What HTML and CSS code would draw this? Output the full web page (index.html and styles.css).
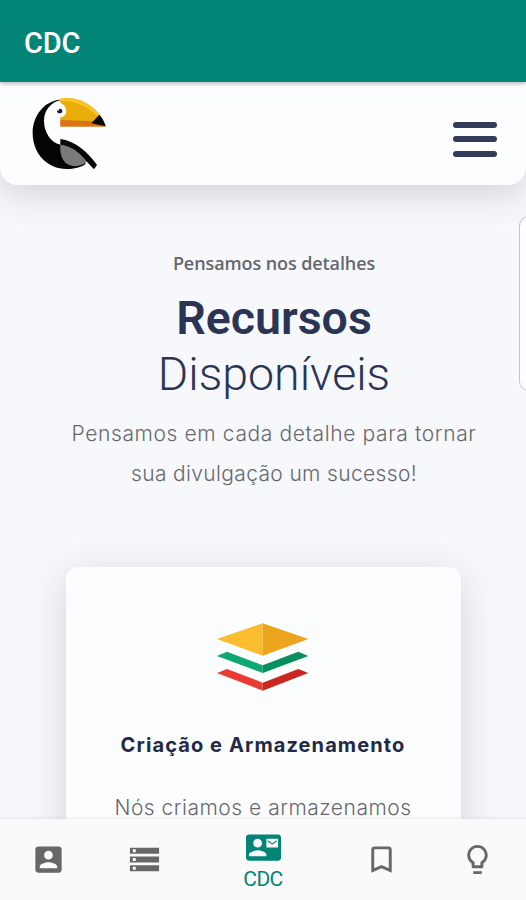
FILE: index.html
```html
<!DOCTYPE html>
<html lang="pt-BR">
<head>
  <meta charset="UTF-8" />
  <meta name="viewport" content="width=device-width, initial-scale=1.0"/>
  <title>CDC</title>
  <link rel="stylesheet" href="styles.css">
</head>
<body>
  <!-- App Bar -->
  <header class="app-bar">CDC</header>

  <!-- Site Navigation -->
  <nav class="site-nav">
    <svg class="logo" viewBox="36 30 222 216">
      <path d="M121 35C74 38 38 82 38 135C38 197 82 243 140 243C162 243 183 238 198 227L121 170C92 164 72 132 72 98C72 68 92 43 121 37Z" fill="#050505"/>
      <path d="M121 32C153 26 187 35 211 53C232 68 248 87 257 115L121 108V88C134 86 141 77 138 65C136 54 131 49 121 45Z" fill="#e9ad0a"/>
      <path d="M121 32C157 27 190 38 216 59L242 83L233 84C203 54 165 38 121 38Z" fill="#fcc425"/>
      <path d="M121 95L220 100L257 116H121Z" fill="#db7413"/>
      <path d="M238 80C247 90 253 101 257 115L214 106Z" fill="#080808"/>
      <ellipse cx="119" cy="69" rx="8" ry="7" fill="#172235"/>
      <circle cx="114" cy="65" r="3" fill="#fff"/>
      <path d="M121 171C153 174 184 192 202 220C187 235 164 239 143 229C126 219 119 196 121 171Z" fill="#7b7a7b"/>
      <path d="M121 153C164 158 204 192 231 231L222 244L202 223C180 193 153 174 121 171Z" fill="#080808"/>
    </svg>
    <div class="menu-button">
      <span></span>
      <span></span>
      <span></span>
    </div>
  </nav>

  <!-- Page Content -->
  <main class="content">
    <div class="side-panel"></div>
    <div class="intro">
      <p class="eyebrow">Pensamos nos detalhes</p>
      <h1><strong>Recursos</strong><span>Disponíveis</span></h1>
      <p class="lead"><span class="lead-first">Pensamos em cada detalhe para tornar</span><br><span class="lead-second">sua divulgação um sucesso!</span></p>
    </div>
    <section class="card">
      <svg class="layers" viewBox="54 40 276 204">
        <path d="M54 88L191 41V138Z" fill="#fbbc2d"/>
        <path d="M191 41L328 88L191 138Z" fill="#eba41b"/>
        <path d="M54 139L84 126L191 167V190Z" fill="#0fa873"/>
        <path d="M328 139L298 126L191 167V190Z" fill="#078f5d"/>
        <path d="M54 190L84 178L191 219V243Z" fill="#e83c32"/>
        <path d="M328 190L298 178L191 219V243Z" fill="#c9271f"/>
      </svg>
      <h2>Criação e Armazenamento</h2>
      <p>Nós criamos e armazenamos</p>
    </section>
  </main>

  <!-- Bottom Tabs -->
  <footer class="tabs">
    <a class="tab">
      <svg viewBox="0 0 24 24"><path d="M3 5v14c0 1.100.890 2 2 2h14c1.100 0 2-.900 2-2V5c0-1.100-.900-2-2-2H5c-1.110 0-2 .900-2 2zm12 4c0 1.660-1.340 3-3 3s-3-1.340-3-3 1.340-3 3-3 3 1.340 3 3zm-9 8c0-2 4-3.100 6-3.100s6 1.100 6 3.100v1H6v-1z"/></svg>
    </a>
    <a class="tab">
      <svg viewBox="0 0 24 24"><path d="M2 20h20v-4H2v4zm2-3h2v2H4v-2zM2 4v4h20V4H2zm4 3H4V5h2v2zm-4 7h20v-4H2v4zm2-3h2v2H4v-2z"/></svg>
    </a>
    <a class="tab active">
      <svg viewBox="0 0 24 24"><path d="M21 8V7l-3 2-3-2v1l3 2 3-2zm1-5H2C.9 3 0 3.900 0 5v14c0 1.100.9 2 2 2h20c1.100 0 1.990-.9 1.990-2L24 5c0-1.100-.9-2-2-2zM8 6c1.660 0 3 1.340 3 3s-1.340 3-3 3-3-1.340-3-3 1.340-3 3-3zm6 12H2v-1c0-2 4-3.100 6-3.100s6 1.100 6 3.100v1zm8-6h-8V6h8v6z"/></svg>
      <span>CDC</span>
    </a>
    <a class="tab">
      <svg viewBox="0 0 24 24"><path d="M17 3H7c-1.100 0-1.990.9-1.990 2L5 21l7-3 7 3V5c0-1.100-.9-2-2-2zm0 15l-5-2.180L7 18V5h10v13z"/></svg>
    </a>
    <a class="tab">
      <svg viewBox="0 0 24 24"><path d="M9 21c0 .55.450 1 1 1h4c.550 0 1-.450 1-1v-1H9v1zm3-19C8.140 2 5 5.140 5 9c0 2.380 1.190 4.470 3 5.740V17c0 .550.450 1 1 1h6c.550 0 1-.450 1-1v-2.260c1.810-1.270 3-3.360 3-5.740 0-3.860-3.140-7-7-7zm2.850 11.100l-.850.600V16h-4v-2.300l-.850-.600C7.800 12.160 7 10.630 7 9c0-2.760 2.240-5 5-5s5 2.240 5 5c0 1.630-.800 3.160-2.150 4.100z"/></svg>
    </a>
  </footer>
</body>
</html>
```
FILE: styles.css
```css
/* Reset and Base Styles */
* {
  margin: 0;
  padding: 0;
  box-sizing: border-box;
}
body {
  height: 900px;
  display: flex;
  flex-direction: column;
  overflow: hidden;
  font-family: Inter, sans-serif;
  background-color: #f7f8fc;
  color: #67686c;
}

/* App Bar */
.app-bar {
  position: relative;
  z-index: 2;
  flex: none;
  height: 82px;
  padding: 4px 24px 0;
  display: flex;
  align-items: center;
  background-color: #028576;
  color: #fff;
  font-family: Roboto, sans-serif;
  font-size: 29px;
  font-weight: 500;
  letter-spacing: -0.2px;
  box-shadow: 0 1px 5px rgba(0, 0, 0, 0.35);
}

/* Site Navigation */
.site-nav {
  position: relative;
  z-index: 1;
  flex: none;
  height: 103px;
  padding: 0 29px 0 32px;
  display: flex;
  align-items: center;
  justify-content: space-between;
  background-color: #fcfdff;
  border-radius: 0 0 18px 18px;
  box-shadow: 0 10px 34px rgba(40, 40, 50, 0.17);
}
.logo {
  width: 74px;
  height: 72px;
}
.menu-button {
  width: 44px;
  padding-top: 11px;
  display: flex;
  flex-direction: column;
  gap: 8.5px;
}
.menu-button span {
  height: 6px;
  border-radius: 3px;
  background-color: #333b5b;
}

/* Page Content */
.content {
  position: relative;
  flex: 1;
  min-height: 0;
  overflow: hidden;
}
.side-panel {
  position: absolute;
  top: 31px;
  right: -20px;
  width: 27px;
  height: 175px;
  border: 1px solid #c3c5c9;
  border-radius: 10px;
  background-color: #fcfdff;
}
.intro {
  padding: 64px 0 0 22px;
  text-align: center;
}
.eyebrow {
  font-family: "Open Sans", sans-serif;
  font-size: 18px;
  font-weight: 600;
  line-height: 28px;
  letter-spacing: -0.1px;
  color: #66676d;
}
h1 {
  margin-top: 13px;
  font-family: Roboto, sans-serif;
  font-size: 46.5px;
  line-height: 56px;
  color: #2b3553;
}
h1 strong,
h1 span {
  display: block;
}
h1 strong {
  font-weight: 600;
}
h1 span {
  font-weight: 300;
}
.lead {
  margin-top: 12px;
  font-size: 21px;
  font-weight: 300;
  line-height: 40px;
}
.lead-first {
  letter-spacing: 0.62px;
}
.lead-second {
  letter-spacing: 0.35px;
}

/* Feature Card */
.card {
  width: 395px;
  height: 400px;
  margin: 73px auto 0;
  padding-top: 56px;
  border-radius: 12px;
  background-color: #fcfdff;
  box-shadow: 0 8px 38px rgba(40, 40, 50, 0.16);
  text-align: center;
}
.layers {
  display: block;
  width: 92px;
  height: 68px;
  margin: 0 auto;
}
.card h2 {
  margin-top: 38px;
  font-size: 20px;
  font-weight: 700;
  line-height: 32px;
  letter-spacing: 1.1px;
  color: #222846;
}
.card p {
  margin-top: 27px;
  font-size: 21px;
  font-weight: 300;
  line-height: 40px;
  letter-spacing: 0.5px;
}

/* Bottom Tabs */
.tabs {
  position: relative;
  flex: none;
  height: 81px;
  display: flex;
  background-color: #fafafa;
  box-shadow: 0 -1px 3px rgba(0, 0, 0, 0.08);
}
.tab {
  flex: 1;
  display: flex;
  flex-direction: column;
  align-items: center;
  padding-top: 23px;
  color: #676767;
}
.tab svg {
  width: 35px;
  height: 35px;
  fill: currentColor;
}
.tab.active {
  flex: none;
  width: 140px;
  padding-top: 11px;
  color: #028576;
}
.tab span {
  margin-top: 1px;
  font-family: Roboto, sans-serif;
  font-size: 21px;
  line-height: 26px;
  letter-spacing: -0.6px;
}
```
